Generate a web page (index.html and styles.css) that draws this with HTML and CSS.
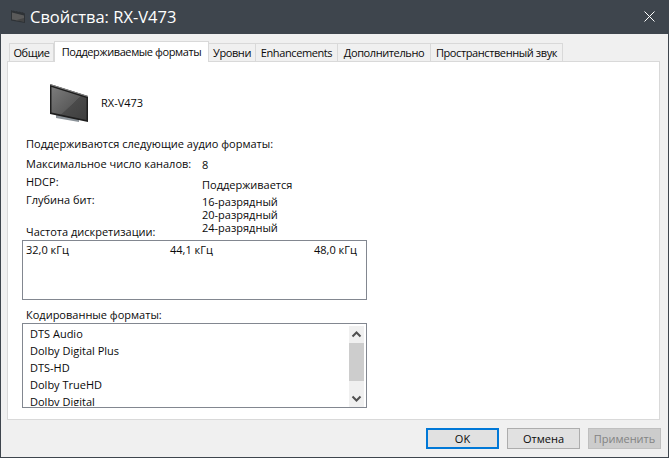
FILE: index.html
```html
<!DOCTYPE html>
<html lang="ru">
<head>
<meta charset="utf-8">
<title>Свойства: RX-V473</title>
<link rel="stylesheet" href="styles.css">
</head>
<body>
<div class="window">
  <header class="titlebar">
    <svg class="title-icon" width="16" height="16" viewBox="0 0 16 16">
      <path d="M1 1 3 2 3 1.5 6 2.5 6 2 9 3 9 2.5 12 3.5 12 3 15 4.5V14L1 11.5Z" fill="#2e3236"/>
      <path d="M2 3.5 14 6.5V12.5L2 10.5Z" fill="#5a5a5a"/>
      <path d="M5 11.5 14 9V12.5Z" fill="#444"/>
    </svg>
    <span class="title-text">Свойства: RX-V473</span>
    <svg class="close" width="11" height="11" viewBox="0 0 11 11">
      <path d="M.5.5 10.5 10.5M10.5.5.5 10.5" stroke="#fff" stroke-width="1" fill="none"/>
    </svg>
  </header>
  <div class="body">
    <nav class="tabs">
      <span class="tab t1">Общие</span>
      <span class="tab active">Поддерживаемые форматы</span>
      <span class="tab t3">Уровни</span>
      <span class="tab t4">Enhancements</span>
      <span class="tab t5">Дополнительно</span>
      <span class="tab t6">Пространственный звук</span>
    </nav>
    <main class="panel">
      <div class="device">
        <svg class="tv" width="40" height="42" viewBox="0 0 40 42">
          <defs>
            <linearGradient id="scr" x1="0" y1="0" x2="1" y2="1">
              <stop offset="0" stop-color="#7c7c7c"/>
              <stop offset=".55" stop-color="#5c5c5c"/>
              <stop offset=".56" stop-color="#4a4a4a"/>
              <stop offset="1" stop-color="#3e3e3e"/>
            </linearGradient>
          </defs>
          <path d="M7 31 30 35V39L7 35Z" fill="#8b9298"/>
          <path d="M13 30 24 32V35L13 33Z" fill="#55595c"/>
          <path d="M1 1 39 13V39L1 31Z" fill="#1e1e1e"/>
          <path d="M1 1 39 13V14L1 2Z" fill="#8a8a8a"/>
          <path d="M2.5 4 37.5 15V37L2.5 29.5Z" fill="url(#scr)"/>
        </svg>
        <span class="device-name">RX-V473</span>
      </div>
      <p class="heading h-main">Поддерживаются следующие аудио форматы:</p>
      <div class="info">
        <span class="label l-ch">Максимальное число каналов:</span><span class="value v-ch">8</span>
        <span class="label l-hdcp">HDCP:</span><span class="value v-hdcp">Поддерживается</span>
        <span class="label l-bit">Глубина бит:</span>
        <span class="value v-bit">16-разрядный<br>20-разрядный<br>24-разрядный</span>
      </div>
      <p class="heading h-rate">Частота дискретизации:</p>
      <div class="box rates">
        <span>32,0 кГц</span><span>44,1 кГц</span><span>48,0 кГц</span>
      </div>
      <p class="heading h-enc">Кодированные форматы:</p>
      <div class="box formats">
        <ul class="format-list">
          <li>DTS Audio</li>
          <li>Dolby Digital Plus</li>
          <li>DTS-HD</li>
          <li>Dolby TrueHD</li>
          <li>Dolby Digital</li>
        </ul>
        <div class="scrollbar">
          <svg class="arrow" width="15" height="17" viewBox="0 0 15 17"><path d="M3.5 10.5 7.5 6.5 11.5 10.5" stroke="#505050" stroke-width="2" fill="none"/></svg>
          <div class="thumb"></div>
          <svg class="arrow end" width="15" height="17" viewBox="0 0 15 17"><path d="M3.5 6.5 7.5 10.5 11.5 6.5" stroke="#505050" stroke-width="2" fill="none"/></svg>
        </div>
      </div>
    </main>
    <footer class="buttons">
      <button class="btn primary">OK</button>
      <button class="btn">Отмена</button>
      <button class="btn disabled">Применить</button>
    </footer>
  </div>
</div>
</body>
</html>
```
FILE: styles.css
```css
* { box-sizing: border-box; }
html, body { margin: 0; padding: 0; }
body {
  width: 669px;
  height: 458px;
  overflow: hidden;
  font-family: "Open Sans", "Noto Sans", sans-serif;
  font-size: 11px;
  color: #0a0a0a;
}
p { margin: 0; }
.window {
  width: 669px;
  height: 458px;
  display: flex;
  flex-direction: column;
  border: 1px solid #3e454d;
  border-top: 0;
  background: #f0f0f0;
}
.titlebar {
  height: 34px;
  flex: none;
  background: #3e454d;
  display: flex;
  align-items: center;
  padding: 0 13px 1px 9px;
  color: #fff;
}
.title-icon { flex: none; }
.title-text {
  margin-left: 4px;
  font-size: 16.5px;
  line-height: 22px;
  flex: 1;
}
.close { flex: none; }
.body {
  flex: 1;
  display: flex;
  flex-direction: column;
  padding: 6px 8px 0 6px;
}
.tabs {
  display: flex;
  align-items: flex-end;
  height: 21px;
  padding-left: 2px;
  flex: none;
  letter-spacing: -0.4px;
}
.tab {
  height: 18px;
  background: #f0f0f0;
  border: 1px solid #d9d9d9;
  border-bottom: 0;
  border-left: 0;
  display: flex;
  align-items: center;
  justify-content: center;
  white-space: nowrap;
  padding-bottom: 1px;
}
.t1 { width: 45px; border-left: 1px solid #d9d9d9; }
.active {
  width: 155px;
  height: 21px;
  margin-bottom: -1px;
  background: #fff;
  border-left: 1px solid #d9d9d9;
  position: relative;
  z-index: 1;
}
.t3 { width: 47px; }
.t4 { width: 82px; }
.t5 { width: 93px; }
.t6 { width: 132px; }
.panel {
  flex: none;
  height: 359px;
  background: #fff;
  border: 1px solid #d9d9d9;
  padding: 0 0 0 14px;
}
.device {
  display: flex;
  align-items: center;
  height: 42px;
  margin-top: 21px;
  padding-left: 27px;
}
.tv { flex: none; }
.device-name { margin-left: 12px; margin-top: -4px; }
.heading { line-height: 15px; padding-left: 4px; }
.h-main { margin-top: 11px; }
.info {
  display: grid;
  grid-template-columns: 176px 1fr;
  grid-template-rows: 18px 18px auto;
  margin-top: 6px;
  padding-left: 4px;
  line-height: 13px;
}
.l-ch, .v-ch, .l-hdcp, .v-hdcp { align-self: start; }
.v-ch { padding-top: 1px; }
.v-hdcp { padding-top: 3px; }
.v-bit { padding-top: 2px; }
.l-bit { line-height: 13px; }
.h-rate { margin-top: -10px; }
.box {
  width: 345px;
  border: 1px solid #828790;
  background: #fff;
}
.rates {
  height: 60px;
  margin-top: 1px;
  padding: 1px 0 0 3px;
  display: grid;
  grid-template-columns: repeat(3, 144px);
  align-content: start;
  line-height: 15px;
}
.h-enc { margin-top: 7px; }
.formats {
  height: 85px;
  margin-top: 1px;
  display: flex;
  overflow: hidden;
  padding: 1px 2px;
}
.format-list {
  list-style: none;
  margin: 0;
  padding: 0 0 0 5px;
  flex: 1;
  line-height: 17px;
  height: 81px;
  overflow: hidden;
}
.scrollbar {
  width: 15px;
  flex: none;
  margin-top: 1px;
  background: #f0f0f0;
  display: flex;
  flex-direction: column;
  height: 81px;
}
.arrow { display: block; flex: none; }
.thumb { height: 38px; background: #cdcdcd; flex: none; }
.end { margin-top: auto; }
.buttons {
  flex: 1;
  display: flex;
  justify-content: flex-end;
  align-items: flex-start;
  gap: 8px;
  padding-top: 8px;
  margin-right: -1px;
}
.btn {
  width: 73px;
  height: 21px;
  padding: 0;
  background: #e1e1e1;
  border: 1px solid #adadad;
  font: inherit;
  color: #0a0a0a;
  line-height: 17px;
}
.primary { border: 2px solid #0078d7; }
.disabled { background: #cccccc; border-color: #bfbfbf; color: #838383; }
```
